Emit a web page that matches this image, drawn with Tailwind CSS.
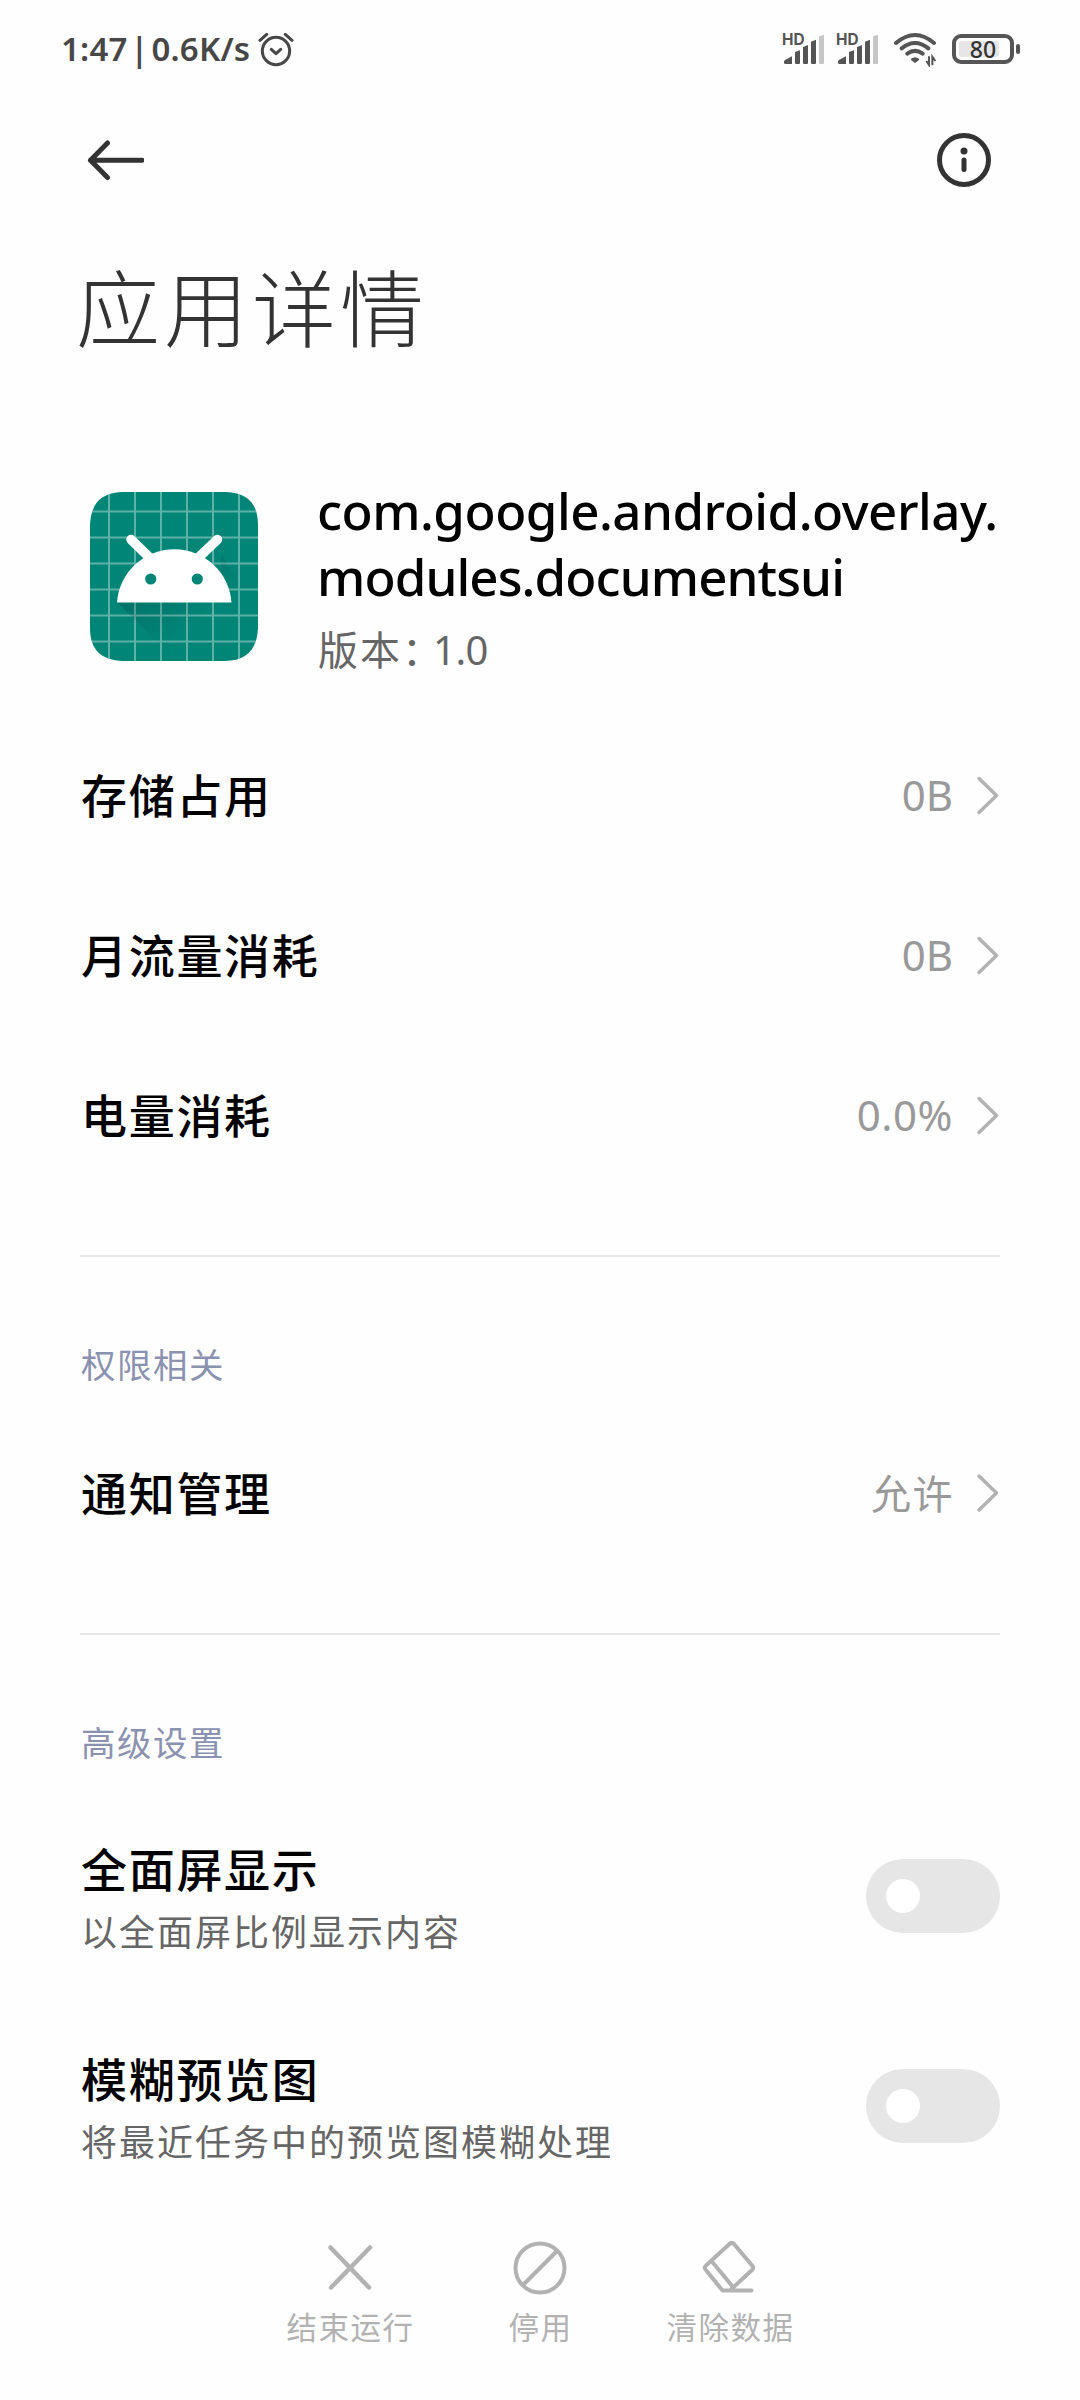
<!DOCTYPE html>
<html lang="zh-CN">
<head>
  <meta charset="UTF-8" />
  <meta name="viewport" content="width=device-width, initial-scale=1.0"/>
  <title>应用详情</title>
  <script src="https://cdn.jsdelivr.net/npm/@tailwindcss/browser@4"></script>
  <style>
    body { font-family: "Noto Sans", "Noto Sans CJK SC", sans-serif; }
  </style>
</head>
<body class="bg-[#fefefe]">
<div class="w-[1080px] h-[2400px] flex flex-col overflow-hidden">

  <!-- Status bar -->
  <div class="h-[98px] shrink-0 flex items-center justify-between pl-[61px] pr-[60px] text-[#474747]">
    <div class="flex items-center">
      <span class="text-[33px] font-semibold leading-none whitespace-pre tracking-[0.2px] [word-spacing:-6px] -mt-[2px]">1:47 | 0.6K/s</span>
      <svg class="ml-[8px] w-[36px] h-[36px]" viewBox="0 0 108 108" fill="none" stroke="currentColor" stroke-width="9" stroke-linecap="round" stroke-linejoin="round">
        <circle cx="54" cy="60" r="41"/>
        <path d="M40 55l14 13 14-13M6 28L26 10M102 28L82 10"/>
      </svg>
    </div>
    <div class="flex items-center">
      <svg class="w-[43px] h-[37px] -mt-[4px]" viewBox="66 54 129 111" fill="#555">
        <text x="66" y="102" font-size="46" font-weight="700" font-family="Inter">HD</text>
        <path d="M72 152Q72 149 75 147L96 136V159H76Q72 159 72 155ZM105 123L120 118V156Q120 159 117 159H108Q105 159 105 156ZM129 108L144 102V156Q144 159 141 159H132Q129 159 129 156ZM153 92L168 86V156Q168 159 165 159H156Q153 159 153 156Z"/>
        <path fill="#c6c6c6" d="M177 78Q179 73 192 72V156Q192 159 189 159H180Q177 159 177 156Z"/>
      </svg>
      <svg class="ml-[11px] w-[43px] h-[37px] -mt-[4px]" viewBox="66 54 129 111" fill="#555">
        <text x="66" y="102" font-size="46" font-weight="700" font-family="Inter">HD</text>
        <path d="M72 152Q72 149 75 147L96 136V159H76Q72 159 72 155ZM105 123L120 118V156Q120 159 117 159H108Q105 159 105 156ZM129 108L144 102V156Q144 159 141 159H132Q129 159 129 156ZM153 92L168 86V156Q168 159 165 159H156Q153 159 153 156Z"/>
        <path fill="#c6c6c6" d="M177 78Q179 73 192 72V156Q192 159 189 159H180Q177 159 177 156Z"/>
      </svg>
      <svg class="ml-[14px] w-[44px] h-[36px]" viewBox="399 66 132 108" fill="none" stroke="#555" stroke-width="12" stroke-linecap="round">
        <path d="M408 102Q465 54 522 102M425 118Q465 86 505 118M442 134Q465 117 488 134"/>
        <path d="M455 151Q465 143 475 151L465 159Z" fill="#555" stroke-width="5" stroke-linejoin="round"/>
        <path d="M507 142V168L499 156M517 169V143L526 156" stroke-width="6" stroke-linecap="butt"/>
      </svg>
      <!-- Battery -->
      <div class="ml-[15px] flex items-center">
        <div class="relative w-[62px] h-[30px] border-4 border-[#555] rounded-[9px]">
          <div class="absolute left-[3px] top-[3px] w-[40px] h-[16px] rounded-[3px] bg-[#e6e6e6]"></div>
          <div class="absolute inset-0 flex items-center justify-center text-[23px] leading-none font-medium text-[#333]">80</div>
        </div>
        <div class="ml-[2px] w-[4px] h-[10px] rounded-[2px] bg-[#555]"></div>
      </div>
    </div>
  </div>

  <!-- Action bar -->
  <div class="h-[124px] shrink-0 flex items-center justify-between pl-[85px] pr-[88px] text-[#333]">
    <svg class="w-[59px] h-[40px]" viewBox="0 0 59 40" fill="none" stroke="currentColor" stroke-width="5" stroke-linecap="round" stroke-linejoin="round">
      <path d="M22.500 3L5.500 20.200L22.500 37.500M5.500 20.200H57"/>
    </svg>
    <svg class="w-[56px] h-[56px]" viewBox="0 0 56 56" fill="none" stroke="currentColor" stroke-width="5">
      <circle cx="28" cy="28" r="24.500"/>
      <circle cx="28" cy="19" r="3.500" fill="currentColor" stroke="none"/>
      <path d="M28 28V37.500" stroke-linecap="round"/>
    </svg>
  </div>

  <h1 class="h-[170px] shrink-0 px-[76px] text-[84px] leading-[173px] tracking-[4px] font-light text-[#333]">应用详情</h1>

  <!-- App info -->
  <div class="h-[324px] shrink-0 flex items-start pt-[100px] pl-[90px]">
    <svg class="w-[168px] h-[169px]" viewBox="0 0 168 169">
      <defs>
        <linearGradient id="shade" x1="0" y1="0" x2="1" y2="1">
          <stop offset="0" stop-color="#000" stop-opacity=".22"/>
          <stop offset=".6" stop-color="#000" stop-opacity="0"/>
        </linearGradient>
        <clipPath id="tile"><path d="M32 0H136C158 1 168 12 168 33V136C167 158 156 169 135 169H33C11 168 0 158 0 136V33C1 11 11 1 32 0Z"/></clipPath>
      </defs>
      <g clip-path="url(#tile)">
        <rect width="168" height="169" fill="#008577"/>
        <path d="M19 0V169M45 0V169M71 0V169M97 0V169M123 0V169M149 0V169M0 19.500H168M0 45.500H168M0 71.500H168M0 97.500H168M0 123.500H168M0 149.500H168" stroke="#fff" stroke-opacity=".36" stroke-width="2"/>
        <path d="M27 110L86 169H168V120L131 62V110Z" fill="url(#shade)"/>
      </g>
      <path d="M27 110.500A57.400 57.400 0 0 1 141.500 110.500Z" fill="#fff"/>
      <path d="M41 47.500L60 66M127.500 47.500L108 66" stroke="#fff" stroke-width="9.500" stroke-linecap="round"/>
      <circle cx="60.700" cy="87" r="5.600" fill="#008577"/>
      <circle cx="107.300" cy="87" r="5.600" fill="#008577"/>
    </svg>
    <div class="ml-[59px] -mt-[15px]">
      <div class="text-[51px] leading-[66px] font-medium text-black">
        <div class="tracking-[-0.5px]">com.google.android.overlay.</div>
        <div class="tracking-[-0.9px]">modules.documentsui</div>
      </div>
      <div class="mt-[15px] pl-px flex text-[40px] leading-[52px] text-[#666]">
        <span class="tracking-[2px]">版本</span><span class="w-[31px] [font-feature-settings:'halt']">：</span><span class="tracking-[-0.5px]">1.0</span>
      </div>
    </div>
  </div>

  <!-- Usage rows -->
  <div class="mx-[80px] h-[541px] shrink-0 border-b-2 border-[#e6e6e6]">
    <div class="h-[160px] flex items-center justify-between">
      <span class="pl-px -mt-[2px] text-[46px] tracking-[1.700px] font-medium text-black">存储占用</span>
      <span class="flex items-center text-[42px] text-[#999]"><span class="-mt-[3px]">0B</span>
        <svg class="ml-[23px] w-[24px] h-[40px]" viewBox="0 0 24 40" fill="none" stroke="#b2b2b2" stroke-width="3.500" stroke-linecap="round" stroke-linejoin="round"><path d="M3 2.500L20.500 19.500L3 36.500"/></svg>
      </span>
    </div>
    <div class="h-[160px] flex items-center justify-between">
      <span class="pl-px -mt-[2px] text-[46px] tracking-[1.700px] font-medium text-black">月流量消耗</span>
      <span class="flex items-center text-[42px] text-[#999]"><span class="-mt-[3px]">0B</span>
        <svg class="ml-[23px] w-[24px] h-[40px]" viewBox="0 0 24 40" fill="none" stroke="#b2b2b2" stroke-width="3.500" stroke-linecap="round" stroke-linejoin="round"><path d="M3 2.500L20.500 19.500L3 36.500"/></svg>
      </span>
    </div>
    <div class="h-[160px] flex items-center justify-between">
      <span class="pl-px -mt-[2px] text-[46px] tracking-[1.700px] font-medium text-black">电量消耗</span>
      <span class="flex items-center text-[42px] text-[#999]"><span class="-mt-[3px] tracking-[0.5px]">0.0%</span>
        <svg class="ml-[23px] w-[24px] h-[40px]" viewBox="0 0 24 40" fill="none" stroke="#b2b2b2" stroke-width="3.500" stroke-linecap="round" stroke-linejoin="round"><path d="M3 2.500L20.500 19.500L3 36.500"/></svg>
      </span>
    </div>
  </div>

  <!-- Permissions -->
  <div class="mx-[80px] h-[378px] shrink-0 border-b-2 border-[#e6e6e6] pt-[82px]">
    <div class="h-[52px] pl-px leading-[52px] text-[34.500px] tracking-[1.500px] text-[#8b92b0]">权限相关</div>
    <div class="mt-[22px] h-[160px] flex items-center justify-between">
      <span class="pl-px text-[46px] tracking-[1.700px] font-medium text-black">通知管理</span>
      <span class="flex items-center text-[40px] tracking-[1.500px] text-[#999]"><span class="mt-[2px]">允许</span>
        <svg class="ml-[22px] w-[24px] h-[40px]" viewBox="0 0 24 40" fill="none" stroke="#b2b2b2" stroke-width="3.500" stroke-linecap="round" stroke-linejoin="round"><path d="M3 3L20.500 20L3 37"/></svg>
      </span>
    </div>
  </div>

  <!-- Advanced settings -->
  <div class="mx-[80px] h-[549px] shrink-0 pt-[82px]">
    <div class="h-[52px] pl-px leading-[52px] text-[34.500px] tracking-[1.500px] text-[#8b92b0]">高级设置</div>
    <div class="mt-[22px] h-[210px] flex items-center justify-between">
      <div class="pl-px pt-[5px]">
        <div class="text-[46px] leading-[68px] tracking-[1.700px] font-medium text-black">全面屏显示</div>
        <div class="text-[36px] leading-[59px] tracking-[2px] text-[#666]">以全面屏比例显示内容</div>
      </div>
      <div class="w-[134px] h-[74px] rounded-full bg-[#e6e6e6] flex items-center pl-[20px]">
        <div class="w-[34px] h-[34px] rounded-full bg-white"></div>
      </div>
    </div>
    <div class="h-[210px] flex items-center justify-between">
      <div class="pl-px pt-[5px]">
        <div class="text-[46px] leading-[68px] tracking-[1.700px] font-medium text-black">模糊预览图</div>
        <div class="text-[36px] leading-[59px] tracking-[2px] text-[#666]">将最近任务中的预览图模糊处理</div>
      </div>
      <div class="w-[134px] h-[74px] rounded-full bg-[#e6e6e6] flex items-center pl-[20px]">
        <div class="w-[34px] h-[34px] rounded-full bg-white"></div>
      </div>
    </div>
  </div>

  <!-- Bottom actions -->
  <div class="grow pt-[54px] flex justify-center text-[30.500px] text-[#b2b2b2]">
    <div class="w-[190px] flex flex-col items-center">
      <svg class="w-[60px] h-[60px]" viewBox="0 0 60 60" fill="none" stroke="currentColor" stroke-width="4.500" stroke-linecap="round"><path d="M10.500 9.500L49 49.500M50 9.500L11 49.500"/></svg>
      <span class="mt-[7px] pl-px leading-[44px] tracking-[1.500px]">结束运行</span>
    </div>
    <div class="w-[190px] flex flex-col items-center">
      <svg class="w-[60px] h-[60px]" viewBox="0 0 60 60" fill="none" stroke="currentColor" stroke-width="4"><circle cx="30" cy="30" r="24.500"/><path d="M13 47L47 13"/></svg>
      <span class="mt-[7px] pl-px leading-[44px] tracking-[1.500px]">停用</span>
    </div>
    <div class="w-[190px] flex flex-col items-center">
      <svg class="w-[60px] h-[60px]" viewBox="0 0 60 60" fill="none" stroke="currentColor" stroke-width="4" stroke-linejoin="round" stroke-linecap="round"><path d="M31 51.500L52 32Q54 30 52.500 28L34 6Q32 4 30 5.500L6 27.500Q4 29 5.500 31.500L22.500 52.500H51.500M11.500 23L33 49"/></svg>
      <span class="mt-[7px] pl-px leading-[44px] tracking-[1.500px]">清除数据</span>
    </div>
  </div>

</div>
</body>
</html>
